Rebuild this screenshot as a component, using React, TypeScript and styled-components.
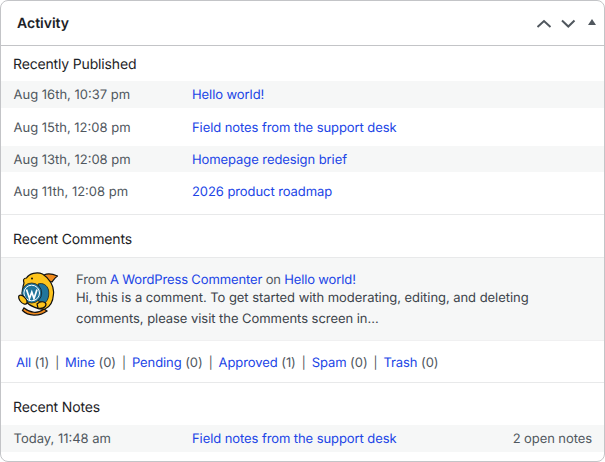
import React from "react";
import styled, { createGlobalStyle } from "styled-components";

const Global = createGlobalStyle`
  html, body { margin: 0; padding: 0; background: #fff; }
  * { box-sizing: border-box; }
`;
const Card = styled.div`
  width: 605px; height: 462px; background: #fff; border: 1px solid #c3c4c7; border-radius: 8px; overflow: hidden;
  font-family: Inter, sans-serif; font-size: 13px; line-height: 20px; color: #50575e; letter-spacing: -0.08px;
  text-rendering: geometricPrecision;
`;
const Header = styled.div`
  height: 45px; border-bottom: 1px solid #c3c4c7; display: flex; align-items: center; justify-content: space-between; padding: 0 7px 0 16px;
`;
const Title = styled.h2`
  margin: 2px 0 0; font-size: 14px; font-weight: 600; color: #1d2327; letter-spacing: 0;
`;
const Controls = styled.div`
  display: flex; align-items: center; gap: 8px;
`;
const Toggle = styled.svg`
  margin-left: 3px;
`;
const Section = styled.section<{ $divider?: boolean }>`
  border-bottom: ${p => (p.$divider ? "1px solid #e8e9ea" : "none")};
`;
const SectionTitle = styled.h3<{ $first?: boolean }>`
  margin: 0; padding: ${p => (p.$first ? "9px" : "15px")} 12px ${p => (p.$first ? "6px" : "7px")}; font-size: 14px; line-height: 20px; font-weight: 400; color: #1d2327; letter-spacing: -0.16px;
`;
const Rows = styled.div`
  padding-bottom: 4px;
`;
const Row = styled.div<{ $odd?: boolean }>`
  display: flex; align-items: center; height: ${p => (p.$odd ? 26.5 : 38)}px; padding: 2px 12px 0; background: ${p => (p.$odd ? "#f6f7f7" : "transparent")};
`;
const DateCell = styled.span`
  width: 179px; flex: none; padding-left: 0.5px; letter-spacing: 0;
`;
const A = styled.a`
  color: #2145e6; text-decoration: none;
`;
const Right = styled.span`
  margin-left: auto;
`;
const Comment = styled.div`
  background: #f6f7f7; border-top: 1px solid #e8e9ea; border-bottom: 1px solid #f0f0f1; height: 84px; padding: 0 12px 0 17px; display: flex; gap: 18px;
`;
const CommentBody = styled.div`
  flex: 1; padding-top: 13.5px;
`;
const CommentMeta = styled.div`
  line-height: 16px; letter-spacing: -0.1px; word-spacing: -0.3px;
`;
const Excerpt = styled.div`
  color: #3c434a; line-height: 21px; letter-spacing: -0.05px;
`;
const Filters = styled.div`
  height: 41px; padding: 2px 15px 0; display: flex; align-items: center;
`;
const Sep = styled.span`
  margin: 0 6px; color: #50575e; font-size: 12px;
`;
const Avatar = styled.svg`
  flex: none; margin-top: 14px;
`;

const filters: [string, number][] = [["All", 1], ["Mine", 0], ["Pending", 0], ["Approved", 1], ["Spam", 0], ["Trash", 0]];

export default function App() {
  return (
    <Card>
      <Global />
      <Header>
        <Title>Activity</Title>
        <Controls>
          <svg width="16" height="18" viewBox="0 0 16 18"><path d="M1.500 13 L8 7 L14.500 13" fill="none" stroke="#50575e" strokeWidth="2" /></svg>
          <svg width="16" height="18" viewBox="0 0 16 18"><path d="M2 6.500 L8.300 12.500 L14.500 6.500" fill="none" stroke="#50575e" strokeWidth="2" /></svg>
          <Toggle width="10" height="18" viewBox="0 0 10 18"><path d="M1 11 L5 5 L9 11 Z" fill="#50575e" /></Toggle>
        </Controls>
      </Header>
      <Section $divider>
        <SectionTitle $first>Recently Published</SectionTitle>
        <Rows>
          <Row $odd><DateCell>Aug 16th, 10:37 pm</DateCell><A>Hello world!</A></Row>
          <Row><DateCell>Aug 15th, 12:08 pm</DateCell><A>Field notes from the support desk</A></Row>
          <Row $odd><DateCell>Aug 13th, 12:08 pm</DateCell><A>Homepage redesign brief</A></Row>
          <Row><DateCell>Aug 11th, 12:08 pm</DateCell><A>2026 product roadmap</A></Row>
        </Rows>
      </Section>
      <Section>
        <SectionTitle>Recent Comments</SectionTitle>
        <Comment>
          <Avatar width="40" height="44" viewBox="0 0 40 44">
            <path d="M26 37 C20 42 12 41 6 36 L4.500 38.500 C10 44 21 45 29 39 Z" fill="#f08a1d" stroke="#111" strokeWidth="1.200" />
            <path d="M26 3 C31 0.500 36 2.500 39.500 4 C37 5.500 35.500 8 34 10 C31 9 28 8 26 7 Z" fill="#f08a1d" stroke="#111" strokeWidth="1.200" />
            <path d="M6 11 C5 8 5.500 6 8.500 6 C11 1.500 19 -0.500 24.500 2 C31 6 36.500 14 35.500 22 C35 30 32 35 27 37 C21 38 12 34 8 30 C4 24 4 16 6 11 Z" fill="#fdc41d" stroke="#111" strokeWidth="1.200" />
            <path d="M20 12 C25 10.500 29 13 30.500 18 C31.500 24 30 28 27 31 L20 29 Z" fill="#21759b" stroke="#111" strokeWidth="0.700" />
            <circle cx="13.700" cy="21" r="10" fill="#21759b" stroke="#111" strokeWidth="0.700" />
            <circle cx="13.700" cy="21" r="7.800" fill="none" stroke="#fff" strokeWidth="1" />
            <path d="M8.500 17.500 L11.500 26.500 L13.800 20 L16 26.500 L19 17.500" fill="none" stroke="#fff" strokeWidth="1.700" />
            <path d="M0.800 24 C3 22 6 24 8 27 C10 30 9 33 6 32 C3 31 0 27 0.800 24 Z" fill="#fdc41d" stroke="#111" strokeWidth="1.200" />
            <path d="M19 32 C22 29 27 29 28 32 C28 36 23 37 20 36 Z" fill="#fdc41d" stroke="#111" strokeWidth="1.200" />
            <circle cx="14" cy="6.500" r="1" fill="#111" />
          </Avatar>
          <CommentBody>
            <CommentMeta>From <A>A WordPress Commenter</A> on <A>Hello world!</A></CommentMeta>
            <Excerpt>Hi, this is a comment. To get started with moderating, editing, and deleting comments, please visit the Comments screen in…</Excerpt>
          </CommentBody>
        </Comment>
        <Section $divider>
          <Filters>
            {filters.map(([n, c], i) => (
              <React.Fragment key={n}>
                {i > 0 && <Sep>|</Sep>}
                <span><A>{n}</A> ({c})</span>
              </React.Fragment>
            ))}
          </Filters>
        </Section>
      </Section>
      <Section>
        <SectionTitle>Recent Notes</SectionTitle>
        <Row $odd><DateCell>Today, 11:48 am</DateCell><A>Field notes from the support desk</A><Right>2 open notes</Right></Row>
      </Section>
    </Card>
  );
}
